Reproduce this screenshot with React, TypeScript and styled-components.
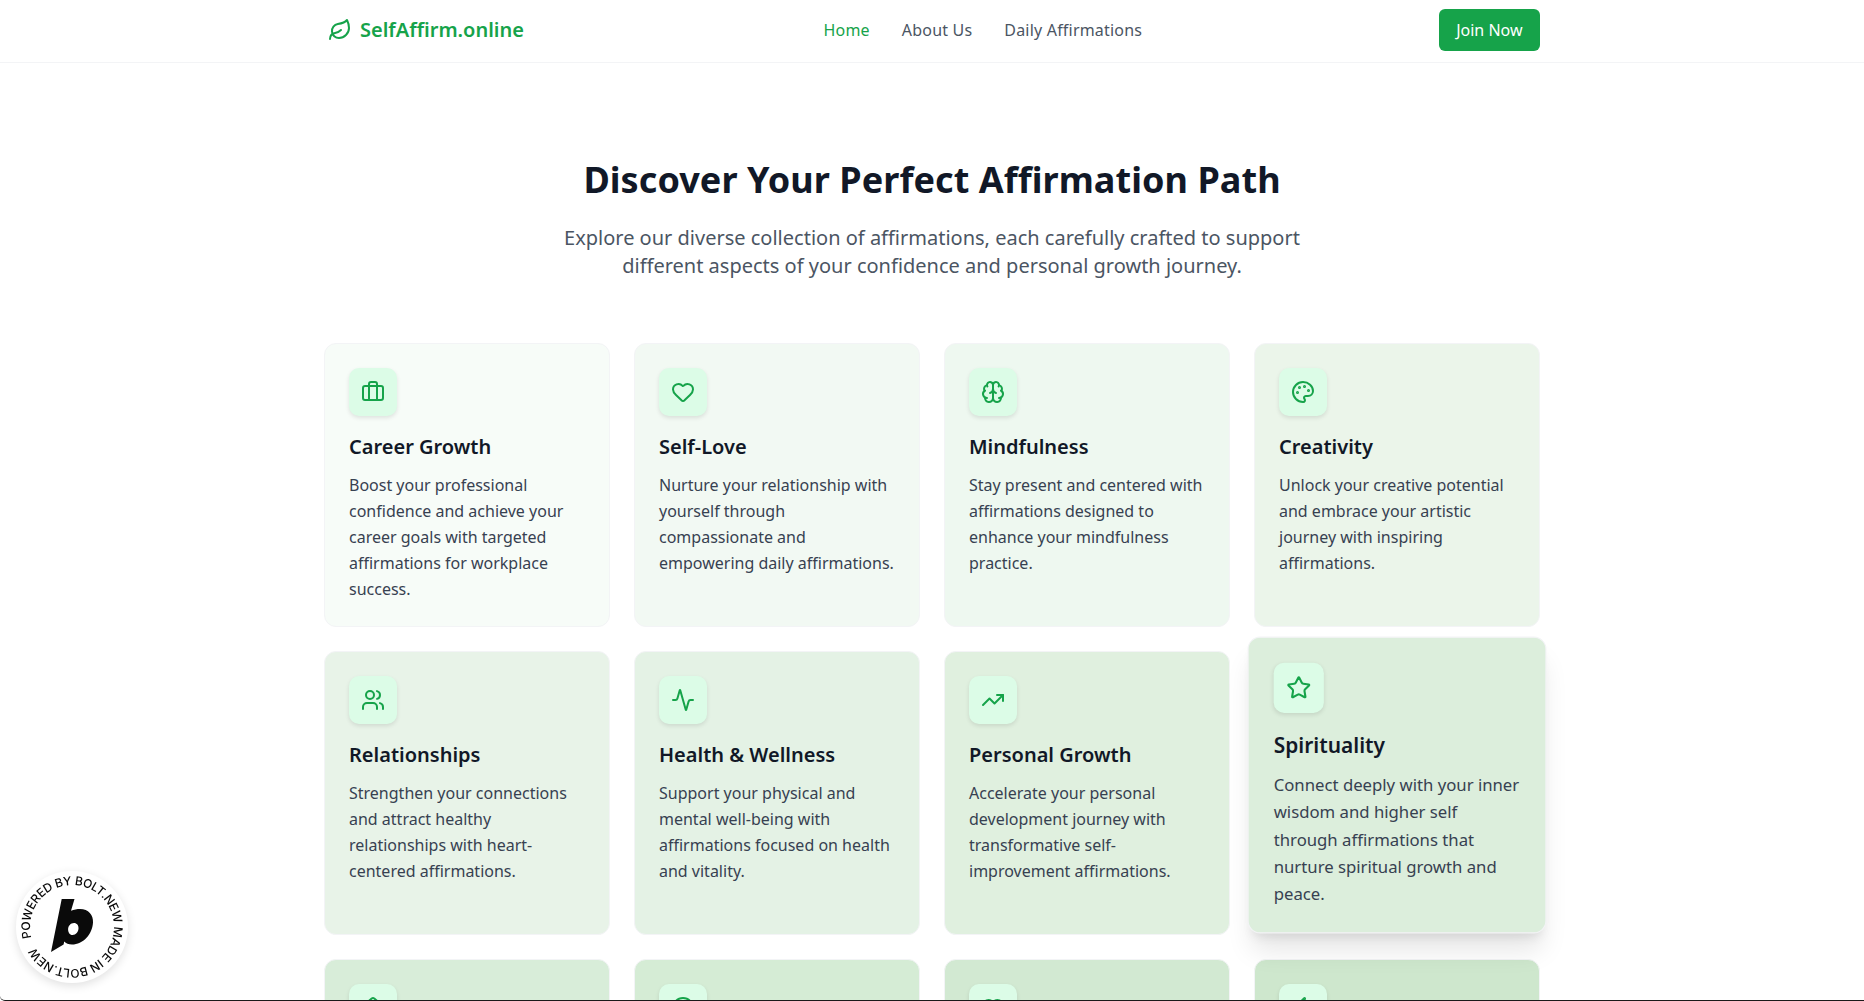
import React from "react";
import styled, { createGlobalStyle } from "styled-components";
import {
  Leaf, Briefcase, Heart, Brain, Palette, Users, Activity, TrendingUp, Star,
  Home, Smile, HeartHandshake, Zap, type LucideIcon,
} from "lucide-react";

const Global = createGlobalStyle`
  * { box-sizing: border-box; }
  html, body { margin: 0; padding: 0; height: 100%; overflow: hidden; background: #fff; }
  body { font-family: "Noto Sans", "Open Sans", sans-serif; color: #111827; line-height: 26px; }
`;

const Page = styled.div`
  height: 100vh;
  overflow: hidden;
  background: #fff;
`;
const Header = styled.header`
  height: 63px;
  padding-bottom: 2px;
  background: #fff;
  border-bottom: 1px solid #f3f4f6;
`;
const HeaderInner = styled.div`
  max-width: 1280px;
  height: 100%;
  margin: 0 auto;
  padding: 0 32px 0 36px;
  display: flex;
  justify-content: space-between;
  align-items: center;
`;
const Logo = styled.a`
  display: flex;
  align-items: center;
  gap: 8px;
  color: #16a34a;
  font-size: 20px;
  font-weight: 600;
`;
const Nav = styled.nav`
  display: flex;
  gap: 32px;
  margin-left: 3px;
`;
const NavLink = styled.a<{ $active?: boolean }>`
  font-size: 16px;
  letter-spacing: 0.2px;
  color: ${(p) => (p.$active ? "#16a34a" : "#4b5563")};
`;
const JoinButton = styled.button`
  height: 42px;
  padding: 0 17.5px;
  border: 0;
  border-radius: 6px;
  background: #16a34a;
  color: #fff;
  font: 400 16px/26px "Noto Sans", sans-serif;
`;
const Main = styled.main`
  max-width: 1280px;
  margin: 0 auto;
  padding: 97px 32px 0;
`;
const Hero = styled.section`
  text-align: center;
  margin-bottom: 63px;
`;
const Title = styled.h1`
  margin: 0 0 24px;
  font-size: 36px;
  line-height: 40px;
  font-weight: 700;
  letter-spacing: 0.06px;
  color: #111827;
`;
const Subtitle = styled.p`
  margin: 0 auto;
  max-width: 768px;
  font-size: 20px;
  line-height: 28px;
  color: #4b5563;
`;
const Grid = styled.section`
  display: grid;
  grid-template-columns: repeat(4, 1fr);
  gap: 24px;
`;
const Card = styled.article<{ $bg: string; $raised?: boolean }>`
  height: 284px;
  padding: 24px;
  border: 1px solid #f3f4f6;
  border-radius: 12px;
  background: ${(p) => p.$bg};
  ${(p) =>
    p.$raised
      ? `position: relative;
         z-index: 1;
         transform: translateY(-8px) scale(1.045);
         box-shadow: 0 20px 25px -5px rgba(0,0,0,.1), 0 8px 10px -6px rgba(0,0,0,.1);`
      : ""}
`;
const IconBox = styled.div`
  width: 48px;
  height: 48px;
  margin-bottom: 17px;
  display: flex;
  align-items: center;
  justify-content: center;
  border-radius: 10px;
  background: #dcfce7;
  color: #16a34a;
  box-shadow: 0 2px 4px rgba(0,0,0,.1);
`;
const CardTitle = styled.h3`
  margin: 0 0 11px;
  font-size: 20px;
  line-height: 28px;
  font-weight: 600;
  color: #111827;
`;
const CardText = styled.p`
  margin: 0;
  font-size: 16px;
  line-height: 26px;
  color: #374151;
`;
const Badge = styled.a`
  position: fixed;
  left: 16px;
  bottom: 18px;
  width: 112px;
  height: 112px;
  border-radius: 50%;
  background: #fff;
  box-shadow: 0 3px 10px rgba(0,0,0,.12);
  z-index: 5;
  svg { display: block; }
  text {
    font-family: "Inter", "Liberation Sans", sans-serif;
    font-size: 12px;
    font-weight: 500;
    fill: #0a0a0a;
  }
`;
const WindowEdge = styled.div`
  position: fixed;
  left: 0;
  right: 0;
  bottom: 0;
  height: 6px;
  border-bottom: 1px solid #1a1a1a;
  border-bottom-left-radius: 5px;
  z-index: 6;
  pointer-events: none;
`;

type Item = { icon: LucideIcon; title: string; text: string; bg: string; raised?: boolean };

const items: Item[] = [
  { icon: Briefcase, title: "Career Growth", text: "Boost your professional confidence and achieve your career goals with targeted affirmations for workplace success.", bg: "#f7fcf8" },
  { icon: Heart, title: "Self-Love", text: "Nurture your relationship with yourself through compassionate and empowering daily affirmations.", bg: "#f2f9f3" },
  { icon: Brain, title: "Mindfulness", text: "Stay present and centered with affirmations designed to enhance your mindfulness practice.", bg: "#eef8f0" },
  { icon: Palette, title: "Creativity", text: "Unlock your creative potential and embrace your artistic journey with inspiring affirmations.", bg: "#ebf5ea" },
  { icon: Users, title: "Relationships", text: "Strengthen your connections and attract healthy relationships with heart-centered affirmations.", bg: "#e8f3e8" },
  { icon: Activity, title: "Health & Wellness", text: "Support your physical and mental well-being with affirmations focused on health and vitality.", bg: "#e4f2e5" },
  { icon: TrendingUp, title: "Personal Growth", text: "Accelerate your personal development journey with transformative self-improvement affirmations.", bg: "#e0f0df" },
  { icon: Star, title: "Spirituality", text: "Connect deeply with your inner wisdom and higher self through affirmations that nurture spiritual growth and peace.", bg: "#dceedc", raised: true },
  { icon: Home, title: "", text: "", bg: "#d8edd9" },
  { icon: Smile, title: "", text: "", bg: "#d5ecd5" },
  { icon: HeartHandshake, title: "", text: "", bg: "#d2e9d2" },
  { icon: Zap, title: "", text: "", bg: "#cee7cd" },
];

export default function App() {
  return (
    <Page>
      <Global />
      <Header>
        <HeaderInner>
          <Logo>
            <Leaf size={24} />
            SelfAffirm.online
          </Logo>
          <Nav>
            <NavLink $active>Home</NavLink>
            <NavLink>About Us</NavLink>
            <NavLink>Daily Affirmations</NavLink>
          </Nav>
          <JoinButton>Join Now</JoinButton>
        </HeaderInner>
      </Header>
      <Main>
        <Hero>
          <Title>Discover Your Perfect Affirmation Path</Title>
          <Subtitle>
            Explore our diverse collection of affirmations, each carefully crafted to support different aspects of your confidence and personal growth journey.
          </Subtitle>
        </Hero>
        <Grid>
          {items.map((it, i) => (
            <Card key={i} $bg={it.bg} $raised={it.raised}>
              <IconBox>
                <it.icon size={24} />
              </IconBox>
              <CardTitle>{it.title}</CardTitle>
              <CardText>{it.text}</CardText>
            </Card>
          ))}
        </Grid>
      </Main>
      <Badge>
        <svg width="112" height="112" viewBox="0 0 112 112">
          <defs>
            <path id="badge-ring" d="M14,56 a42,42 0 1,1 84,0 a42,42 0 1,1 -84,0" />
          </defs>
          <g transform="rotate(-15 56 56)">
            <text textLength="254" lengthAdjust="spacing">
              <textPath href="#badge-ring">POWERED BY BOLT.NEW MADE IN BOLT.NEW</textPath>
            </text>
          </g>
          <path
            fillRule="evenodd"
            fill="#0a0a0a"
            d="M45.7 28 L58.5 28 L55 39.8 C58 38.6 61 38 64 38 C72.5 38 77.5 44 77 51.5 C76.3 63.5 67 73.5 56 73.5 C52.5 73.5 50 72.5 48.2 70.5 L47.6 73.6 L35 81 Z M58 52 C54.5 52 52.3 55 52.1 58 C52 61.3 53.6 64 56.5 64 C60 64 62.3 60.8 62.5 57.5 C62.7 54.3 60.8 52 58 52 Z"
          />
        </svg>
      </Badge>
      <WindowEdge />
    </Page>
  );
}
